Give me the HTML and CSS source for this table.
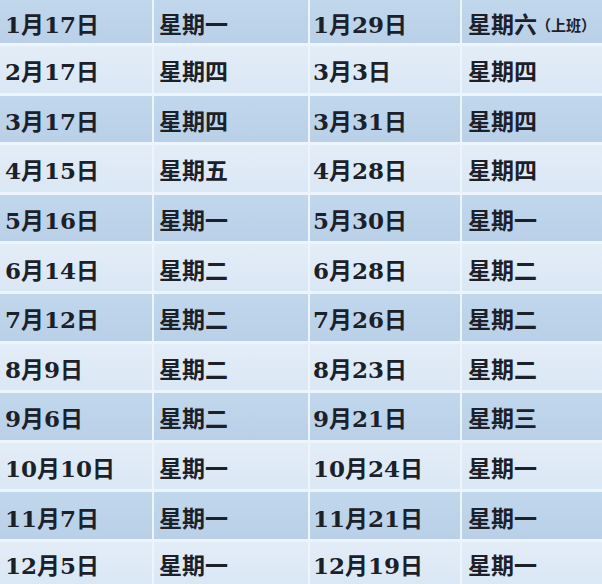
FILE: index.html
```html
<!DOCTYPE html>
<html lang="zh-CN">
<head>
<meta charset="utf-8">
<title>日期表</title>
<link rel="stylesheet" href="styles.css">
</head>
<body>
<div class="table">
  <div class="cell dark">1月17日</div><div class="cell dark">星期一</div><div class="cell dark c3">1月29日</div><div class="cell dark c4">星期六<span class="note">（上班）</span></div>
  <div class="cell light">2月17日</div><div class="cell light">星期四</div><div class="cell light c3">3月3日</div><div class="cell light c4">星期四</div>
  <div class="cell dark">3月17日</div><div class="cell dark">星期四</div><div class="cell dark c3">3月31日</div><div class="cell dark c4">星期四</div>
  <div class="cell light">4月15日</div><div class="cell light">星期五</div><div class="cell light c3">4月28日</div><div class="cell light c4">星期四</div>
  <div class="cell dark">5月16日</div><div class="cell dark">星期一</div><div class="cell dark c3">5月30日</div><div class="cell dark c4">星期一</div>
  <div class="cell light">6月14日</div><div class="cell light">星期二</div><div class="cell light c3">6月28日</div><div class="cell light c4">星期二</div>
  <div class="cell dark">7月12日</div><div class="cell dark">星期二</div><div class="cell dark c3">7月26日</div><div class="cell dark c4">星期二</div>
  <div class="cell light">8月9日</div><div class="cell light">星期二</div><div class="cell light c3">8月23日</div><div class="cell light c4">星期二</div>
  <div class="cell dark">9月6日</div><div class="cell dark">星期二</div><div class="cell dark c3">9月21日</div><div class="cell dark c4">星期三</div>
  <div class="cell light">10月10日</div><div class="cell light">星期一</div><div class="cell light c3">10月24日</div><div class="cell light c4">星期一</div>
  <div class="cell dark">11月7日</div><div class="cell dark">星期一</div><div class="cell dark c3">11月21日</div><div class="cell dark c4">星期一</div>
  <div class="cell light">12月5日</div><div class="cell light">星期一</div><div class="cell light c3">12月19日</div><div class="cell light c4">星期一</div>
</div>
</body>
</html>
```
FILE: styles.css
```css
html, body {
  margin: 0;
  padding: 0;
  background: #eef4fb;
}
.table {
  width: 602px;
  height: 584px;
  display: grid;
  grid-template-columns: 152px 154px 150px 1fr;
  grid-template-rows: 43px repeat(10, 46.6px) 1fr;
  column-gap: 2px;
  row-gap: 3px;
  overflow: hidden;
}
.cell {
  display: flex;
  align-items: center;
  padding: 2px 0 0 5px;
  font-family: "DejaVu Serif", "Noto Sans CJK SC", serif;
  font-weight: bold;
  font-size: 23px;
  color: #1b2029;
  white-space: nowrap;
  overflow: hidden;
}
.c3 { padding-left: 3px; }
.c4 { padding-left: 6px; }
.dark {
  background: linear-gradient(180deg, #c1d7ec 0%, #b9d0e8 100%);
}
.light {
  background: linear-gradient(180deg, #e3edf8 0%, #dae7f4 100%);
}
.note {
  font-family: "Noto Sans CJK SC", sans-serif;
  font-size: 15px;
  font-weight: bold;
  margin-top: 4px;
  margin-left: -1px;
}
```
